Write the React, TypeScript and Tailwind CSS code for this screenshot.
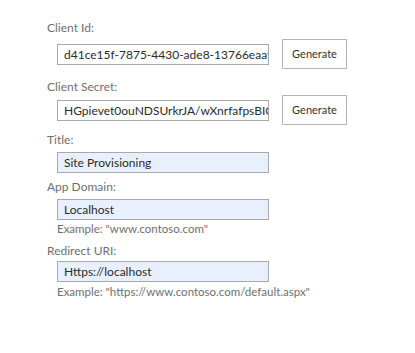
import React from "react";

const font = { fontFamily: 'Lato, "Noto Sans", sans-serif' };

function Label({ children, className = "" }: { children: React.ReactNode; className?: string }) {
  return <div className={`leading-[16px] text-[#6f6f6f] ${className}`}>{children}</div>;
}

function Field({ value, filled }: { value: string; filled?: boolean }) {
  return (
    <input
      readOnly
      value={value}
      style={font}
      className={`ml-[10px] block w-[212px] h-[21px] border border-[#a9a9a9] outline-none pl-[6px] text-[12px] text-[#2b2b2b] ${
        filled ? "bg-[#e8f0fe]" : "bg-white"
      }`}
    />
  );
}

function GenButton() {
  return (
    <div className="ml-[13px] w-[65px] h-[30px] border border-[#b5b5b5] bg-white flex items-center justify-center text-[11px] text-[#333]">
      Generate
    </div>
  );
}

export default function App() {
  return (
    <div className="w-[415px] h-[353px] bg-white pl-[47px] pt-[20px]" style={font}>
      <Label className="text-[12px]">Client Id:</Label>
      <div className="mt-[3px] flex items-center h-[30px]">
        <Field value="d41ce15f-7875-4430-ade8-13766eaa9c62" />
        <GenButton />
      </div>
      <Label className="mt-[10px] text-[12px]">Client Secret:</Label>
      <div className="flex items-center h-[30px]">
        <Field value="HGpievet0ouNDSUrkrJA/wXnrfafpsBIGeQ" />
        <GenButton />
      </div>
      <Label className="mt-[7px] text-[12px]">Title:</Label>
      <div className="mt-[4px]">
        <Field value="Site Provisioning" filled />
      </div>
      <Label className="mt-[6px] text-[12px]">App Domain:</Label>
      <div className="mt-[4px]">
        <Field value="Localhost" filled />
      </div>
      <Label className="mt-[1px] ml-[10px] text-[11.5px]">Example: "www.contoso.com"</Label>
      <Label className="mt-[6px] text-[12px]">Redirect URI:</Label>
      <div className="mt-[2px]">
        <Field value="Https://localhost" filled />
      </div>
      <Label className="mt-[2px] ml-[10px] text-[11.5px]">Example: "https://www.contoso.com/default.aspx"</Label>
    </div>
  );
}
